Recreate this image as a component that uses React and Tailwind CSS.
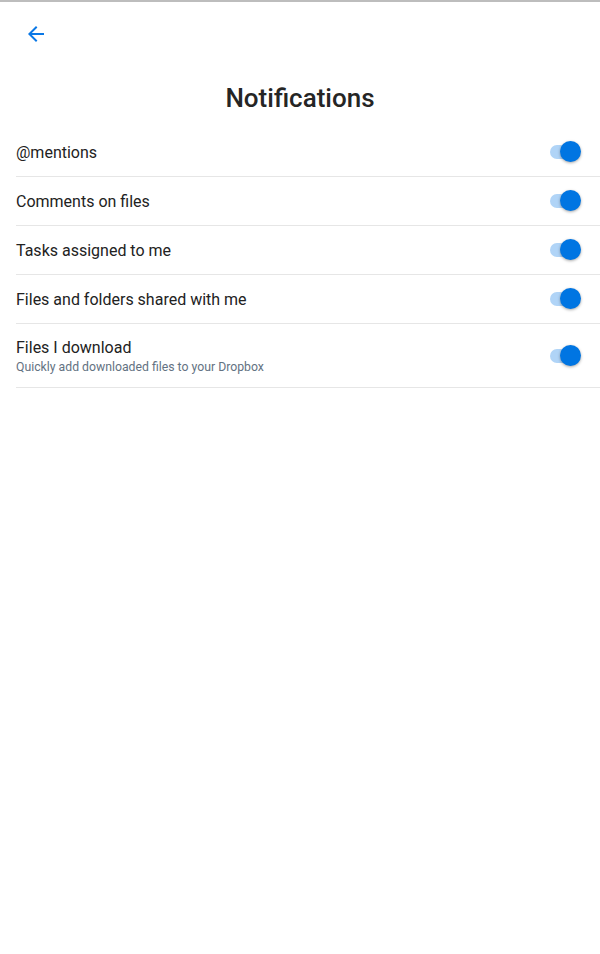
import React, { useState } from 'react';

const SETTINGS = [
  { id: 'mentions', label: '@mentions' },
  { id: 'comments', label: 'Comments on files' },
  { id: 'tasks', label: 'Tasks assigned to me' },
  { id: 'shared', label: 'Files and folders shared with me' },
  { id: 'downloads', label: 'Files I download', hint: 'Quickly add downloaded files to your Dropbox' },
];

const Toggle = ({ on, onChange }) => (
  <button
    onClick={onChange}
    className="relative w-[34px] h-[22px] flex items-center shrink-0"
  >
    <span className={`absolute left-[2px] w-[28px] h-[14px] rounded-full ${on ? 'bg-[#b0d4f7]' : 'bg-[#c8c8c8]'}`} />
    <span
      className={`absolute top-[0px] w-[21px] h-[21px] rounded-full shadow-[0_1px_3px_rgba(0,0,0,0.35)] ${on ? 'left-[12px] bg-[#0075e2]' : 'left-0 bg-[#f5f5f5]'}`}
    />
  </button>
);

const App = () => {
  const [state, setState] = useState({
    mentions: true,
    comments: true,
    tasks: true,
    shared: true,
    downloads: true,
  });

  return (
    <div className="min-h-[954px] bg-white border-t-2 border-[#bdbdbd] font-['Roboto',sans-serif]">
      <div className="h-[62px] pl-[24px] pt-[20px]">
        <svg width="24" height="24" viewBox="0 0 24 24" className="text-[#0a78e6]">
          <path fill="currentColor" d="M20 11H7.83l5.59-5.59L12 4l-8 8 8 8 1.41-1.41L7.83 13H20v-2z" />
        </svg>
      </div>

      <h1 className="text-center text-[26px] font-medium text-[#252525] leading-[34px] pt-[17px] pb-[13px]">
        Notifications
      </h1>

      <div className="pl-[16px]">
        {SETTINGS.map((s) => (
          <div
            key={s.id}
            className={`flex items-center justify-between border-b border-[#e6e6e6] pr-[18px] ${s.hint ? 'h-[64px]' : 'h-[49px]'}`}
          >
            <div className="flex flex-col pt-[2px]">
              <span className="text-[16px] text-[#222] leading-[20px]">{s.label}</span>
              {s.hint && (
                <span className="text-[12.25px] text-[#637282] leading-[16px] mt-[1px]">{s.hint}</span>
              )}
            </div>
            <Toggle
              on={state[s.id]}
              onChange={() => setState((p) => ({ ...p, [s.id]: !p[s.id] }))}
            />
          </div>
        ))}
      </div>
    </div>
  );
};

export default App;
